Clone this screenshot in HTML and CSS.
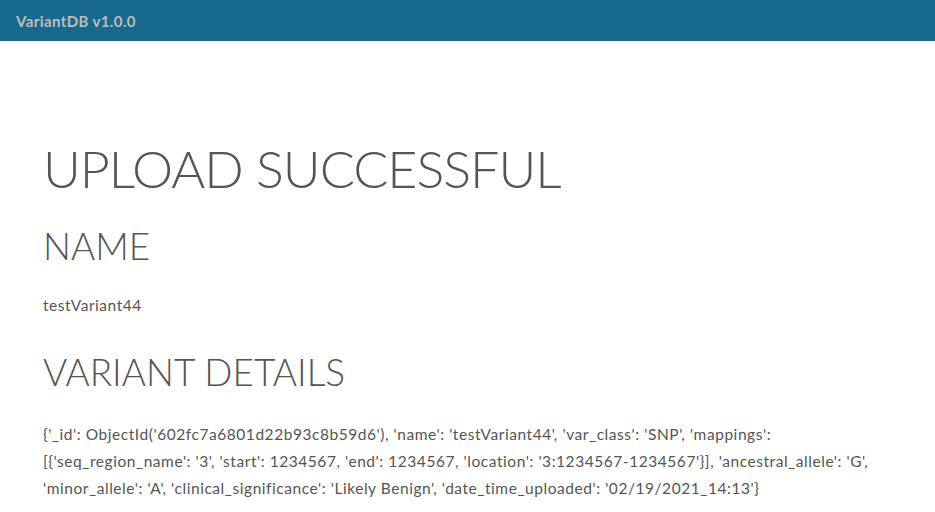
FILE: index.html
```html
<!DOCTYPE html>
<html>
<head>
<meta charset="utf-8">
<link rel="stylesheet" href="styles.css">
</head>
<body>
<nav class="navbar"><span class="brand">VariantDB v1.0.0</span></nav>
<main class="content">
<h1 class="title">UPLOAD SUCCESSFUL</h1>
<h2 class="section">NAME</h2>
<p class="text">testVariant44</p>
<h2 class="section section-details">VARIANT DETAILS</h2>
<p class="text details">{'_id': ObjectId('602fc7a6801d22b93c8b59d6'), 'name': 'testVariant44', 'var_class': 'SNP', 'mappings': [{'seq_region_name': '3', 'start': 1234567, 'end': 1234567, 'location': '3:1234567-1234567'}], 'ancestral_allele': 'G', 'minor_allele': 'A', 'clinical_significance': 'Likely Benign', 'date_time_uploaded': '02/19/2021_14:13'}</p>
</main>
</body>
</html>
```
FILE: styles.css
```css
html, body { margin: 0; padding: 0; background: #fff; }
body { font-family: Lato, "Open Sans", sans-serif; color: #555; }
.navbar { height: 41px; background: #176a8d; display: flex; align-items: center; padding-left: 16px; }
.brand { color: #bdbdbd; font-size: 15px; font-weight: 700; letter-spacing: 0.4px; }
.content { padding: 0 43px; }
.title { margin: 99px 0 0; font-size: 52px; font-weight: 300; line-height: 1.1; letter-spacing: -1px; }
.section { margin: 29px 0 0; font-size: 37px; font-weight: 300; line-height: 1.1; letter-spacing: 0; }
.section-details { margin-top: 33px; }
.text { margin: 25px 0 0; font-size: 15.5px; line-height: 27px; letter-spacing: 0.55px; }
.details { margin-top: 28px; }
```
